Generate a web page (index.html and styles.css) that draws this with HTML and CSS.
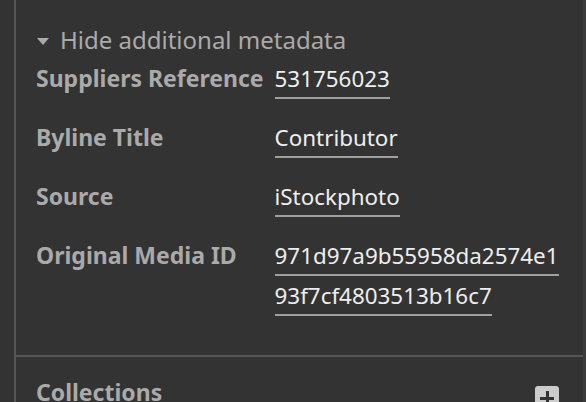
FILE: index.html
```html
<!DOCTYPE html>
<html>
<head>
<meta charset="utf-8">
<link rel="stylesheet" href="styles.css">
</head>
<body>
<div class="layout">
  <div class="gutter"></div>
  <div class="panel">
    <section class="meta">
      <div class="toggle"><span class="tri"></span>Hide additional metadata</div>
      <dl class="fields">
        <dt>Suppliers Reference</dt>
        <dd><span class="val">531756023</span></dd>
        <dt>Byline Title</dt>
        <dd><span class="val">Contributor</span></dd>
        <dt>Source</dt>
        <dd><span class="val">iStockphoto</span></dd>
        <dt>Original Media ID</dt>
        <dd><span class="val">971d97a9b55958da2574e193f7cf4803513b16c7</span></dd>
      </dl>
    </section>
    <section class="collections">
      <h2>Collections</h2>
      <button class="add" aria-label="Add"><span class="plus"></span></button>
    </section>
  </div>
</div>
</body>
</html>
```

FILE: styles.css
```css
html, body {
  margin: 0;
  padding: 0;
  background: #333333;
  height: 100%;
  overflow: hidden;
}
body {
  font-family: "Noto Sans", "Open Sans", sans-serif;
  color: #aaaaaa;
}
.layout {
  display: flex;
  min-height: 100%;
}
.gutter {
  width: 14px;
  flex: none;
}
.panel {
  flex: 1;
  border-left: 2px solid #565656;
  border-right: 3px solid #3b3b3b;
}
.meta {
  padding: 24px 18px 39px 20px;
  border-bottom: 2px solid #565656;
}
.toggle {
  font-size: 24px;
  line-height: 32px;
  display: flex;
  align-items: center;
}
.tri {
  width: 0;
  height: 0;
  border-left: 6px solid transparent;
  border-right: 6px solid transparent;
  border-top: 7px solid #aaaaaa;
  margin: 2px 11px 0 1px;
}
.fields {
  display: grid;
  grid-template-columns: auto 1fr;
  column-gap: 11px;
  row-gap: 18px;
  margin: 2px 0 0 0;
  line-height: 40px;
  align-items: baseline;
}
.fields dt {
  font-size: 23px;
  font-weight: bold;
  color: #aaaaaa;
  white-space: nowrap;
}
.fields dd {
  margin: 0;
  font-size: 22.4px;
  color: #eeeeee;
  word-break: break-all;
}
.val {
  border-bottom: 2px solid #a0a0a0;
  padding-bottom: 3px;
}
.collections {
  padding: 18px 20px;
  display: flex;
  justify-content: space-between;
  align-items: flex-start;
}
.collections h2 {
  margin: 0;
  font-size: 23px;
  font-weight: bold;
  color: #aaaaaa;
  line-height: 34px;
}
.add {
  width: 24px;
  height: 24px;
  background: #cccccc;
  border: none;
  border-radius: 3px;
  padding: 0;
  margin-top: 11px;
  margin-right: 4px;
  position: relative;
}
.plus::before, .plus::after {
  content: "";
  position: absolute;
  background: #333333;
}
.plus::before {
  left: 5px; right: 5px; top: 11px; height: 3px;
}
.plus::after {
  top: 5px; bottom: 5px; left: 11px; width: 3px;
}
```
